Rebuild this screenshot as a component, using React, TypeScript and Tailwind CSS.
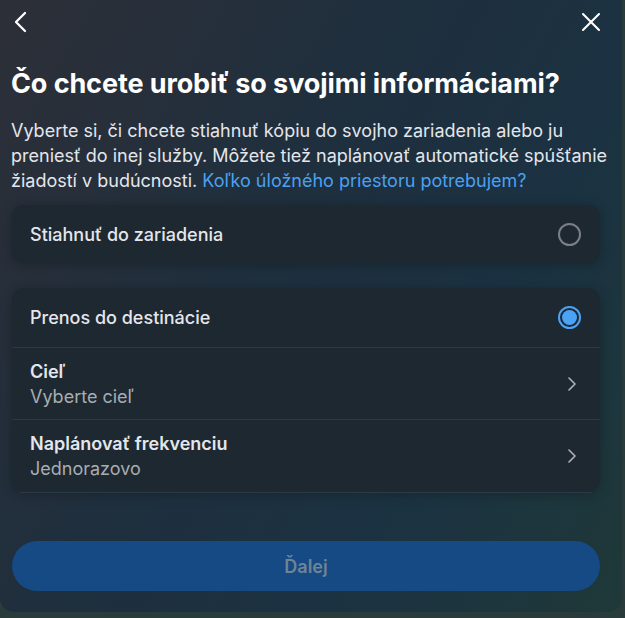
import React from 'react';

const ChevronRight: React.FC = () => (
  <svg viewBox="0 0 10 16" fill="none" stroke="currentColor" strokeWidth="1.6" strokeLinecap="round" strokeLinejoin="round" className="w-[10px] h-[16px] text-[#b0b3b8]">
    <path d="m2 2 6 6-6 6" />
  </svg>
);

const Radio: React.FC<{ checked?: boolean }> = ({ checked }) =>
  checked ? (
    <div className="w-[23px] h-[23px] rounded-full border-2 border-[#4ba3f5] flex items-center justify-center">
      <div className="w-[15px] h-[15px] rounded-full bg-[#4ba3f5]" />
    </div>
  ) : (
    <div className="w-[23px] h-[23px] rounded-full border-2 border-[#7b8087]" />
  );

const Row: React.FC<{ title: string; value: string; last?: boolean }> = ({ title, value, last }) => (
  <div className={`flex items-center justify-between pl-[18px] pr-[23px] h-[72px] ${last ? '' : 'border-b border-[#2c3a45]'}`}>
    <div className="flex flex-col">
      <span className="text-[18px] leading-[25px] font-semibold text-[#e4e6eb]">{title}</span>
      <span className="text-[18px] leading-[25px] text-[#a8adb3]">{value}</span>
    </div>
    <ChevronRight />
  </div>
);

export default function App() {
  return (
    <div className="w-[625px] h-[618px] bg-[#2a3b3c] font-['Inter','Roboto',sans-serif]">
      <div className="w-[622px] h-[612px] rounded-b-[14px] overflow-hidden bg-[linear-gradient(120deg,#2d2f38_0%,#1e2f3e_45%,#1b3242_70%,#1f3838_100%)] flex flex-col pl-3 pr-[22px]">
        {/* Header */}
        <div className="flex items-center justify-between h-[44px]">
          <svg viewBox="0 0 14 22" fill="none" stroke="currentColor" strokeWidth="2.3" strokeLinecap="round" strokeLinejoin="round" className="w-[14px] h-[22px] text-white ml-[1px]">
            <path d="M12 2 3 11l9 9" />
          </svg>
          <svg viewBox="0 0 20 20" className="w-[20px] h-[20px] text-white -mr-[1px]" fill="none" stroke="currentColor" strokeWidth="2.1" strokeLinecap="round">
            <path d="M2 2l16 16M18 2 2 18" />
          </svg>
        </div>

        {/* Title */}
        <h1 className="mt-[23px] text-[27px] leading-[34px] font-bold text-white tracking-[-0.1px] -ml-[1px] whitespace-nowrap">
          Čo chcete urobiť so svojimi informáciami?
        </h1>
        <p className="mt-[17px] text-[18px] leading-[25px] text-[#e4e6eb] -ml-[1px] -mr-[20px]">
          Vyberte si, či chcete stiahnuť kópiu do svojho zariadenia alebo ju preniesť do inej služby. Môžete tiež
          naplánovať automatické spúšťanie žiadostí v budúcnosti.{' '}
          <span className="text-[#4aa1f0]">Koľko úložného priestoru potrebujem?</span>
        </p>

        {/* Option 1 */}
        <div className="mt-[12px] h-[58px] shrink-0 rounded-[12px] bg-[#1e2831] shadow-[0_2px_12px_rgba(0,0,0,0.25)] flex items-center justify-between pl-[18px] pr-[19px]">
          <span className="text-[18px] font-medium text-[#e4e6eb]">Stiahnuť do zariadenia</span>
          <Radio />
        </div>

        {/* Option 2 */}
        <div className="mt-[25px] rounded-[12px] bg-[#1e2831] shadow-[0_2px_12px_rgba(0,0,0,0.25)] flex flex-col">
          <div className="h-[60px] flex items-center justify-between pl-[18px] pr-[19px] border-b border-[#2c3a45]">
            <span className="text-[18px] font-medium text-[#e4e6eb]">Prenos do destinácie</span>
            <Radio checked />
          </div>
          <Row title="Cieľ" value="Vyberte cieľ" />
          <Row title="Naplánovať frekvenciu" value="Jednorazovo" last />
        </div>
        <div className="mx-[8px] h-px bg-[#2c3a45]" />

        {/* Next */}
        <button className="mt-[48px] h-[50px] shrink-0 rounded-full bg-[#164a84] text-[18px] font-semibold text-[#6f8494]">
          Ďalej
        </button>
      </div>
    </div>
  );
}
